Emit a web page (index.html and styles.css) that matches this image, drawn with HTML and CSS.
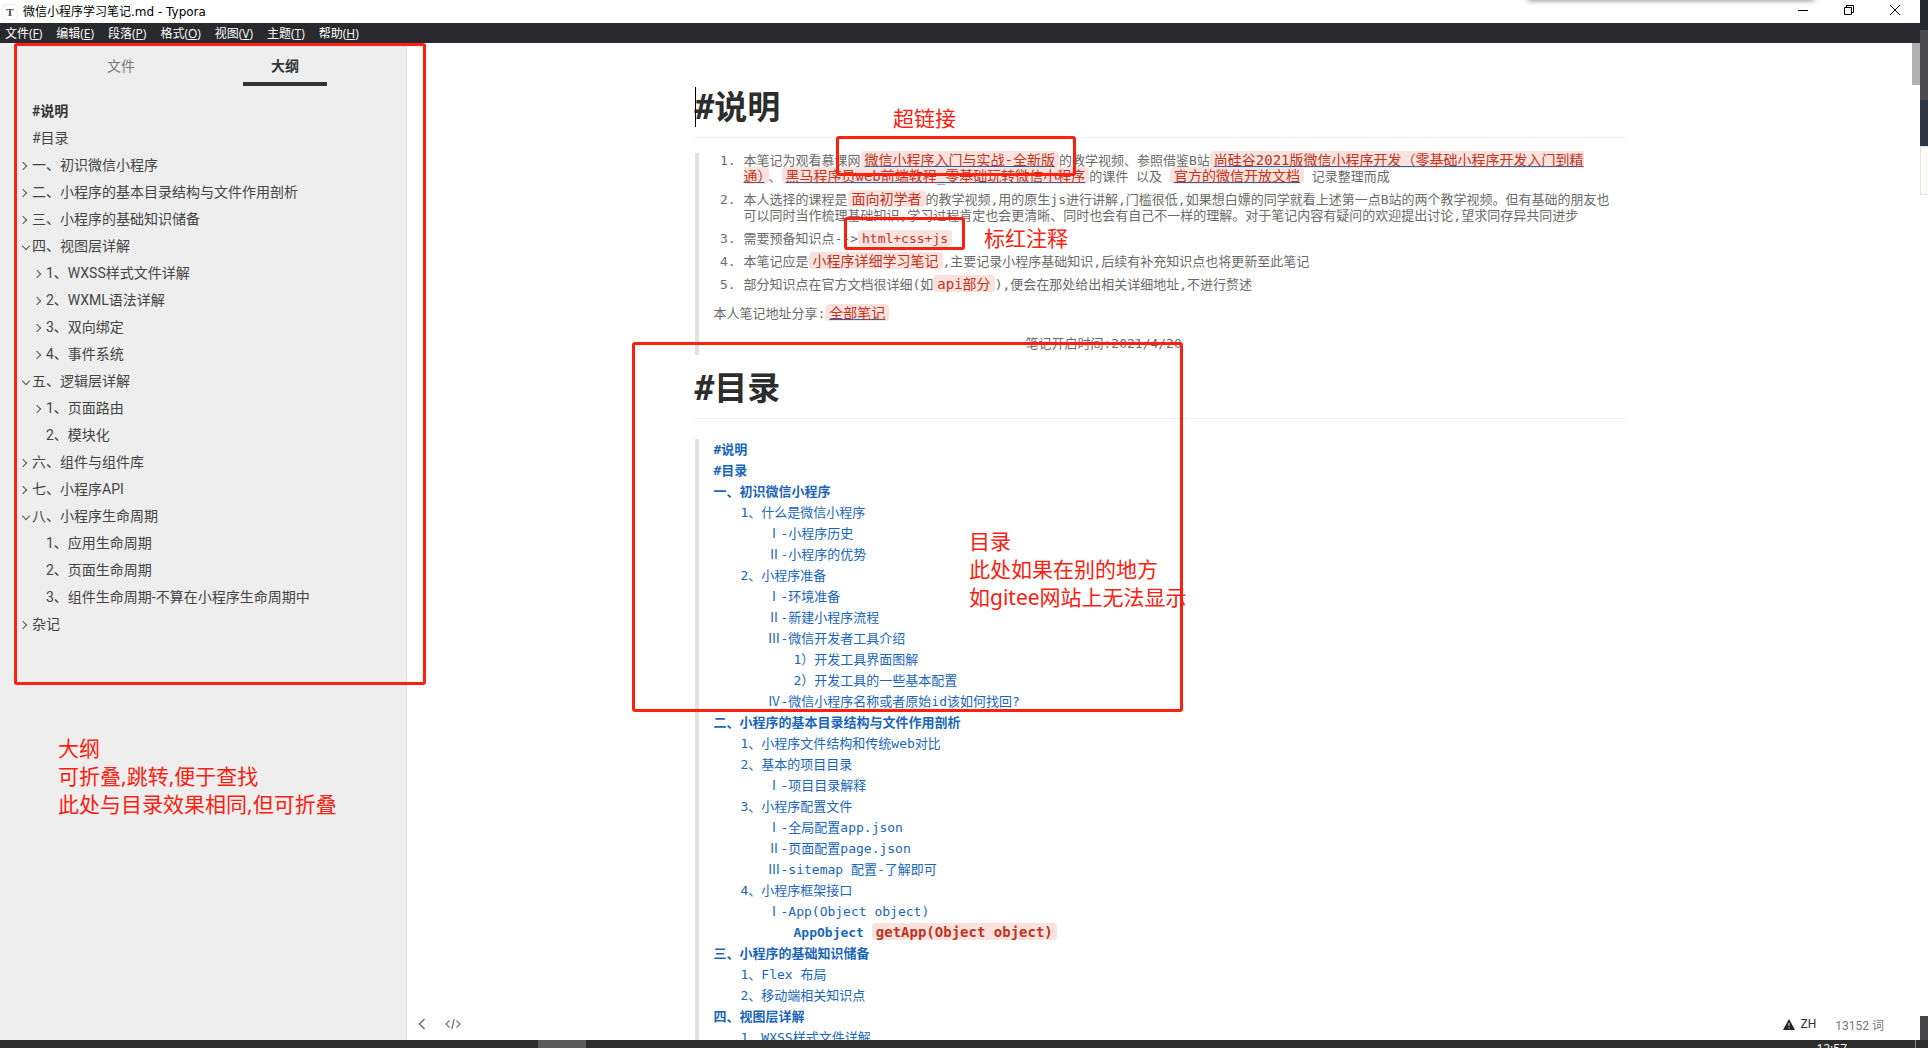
FILE: index.html
```html
<!DOCTYPE html>
<html lang="zh-CN">
<head>
<meta charset="utf-8">
<title>微信小程序学习笔记.md - Typora</title>
<link rel="stylesheet" href="styles.css">
</head>
<body>
<div class="screen">
  <div class="desktop">
    <div class="window">
      <header class="titlebar">
        <span class="app-icon">T</span>
        <span class="title">微信小程序学习笔记.md - Typora</span>
        <div class="window-buttons">
          <button type="button" aria-label="最小化"><svg width="12" height="12" viewBox="0 0 12 12"><path d="M1 6.500h10"/></svg></button>
          <button type="button" aria-label="还原"><svg width="12" height="12" viewBox="0 0 12 12"><path d="M1.500 3.500h7v7h-7zM3.500 3.500v-2h7v7h-2"/></svg></button>
          <button type="button" aria-label="关闭"><svg width="12" height="12" viewBox="0 0 12 12"><path d="M1 1l10 10M11 1L1 11"/></svg></button>
        </div>
      </header>
      <nav class="menubar">
        <button type="button">文件(<u>F</u>)</button>
        <button type="button">编辑(<u>E</u>)</button>
        <button type="button">段落(<u>P</u>)</button>
        <button type="button">格式(<u>O</u>)</button>
        <button type="button">视图(<u>V</u>)</button>
        <button type="button">主题(<u>T</u>)</button>
        <button type="button">帮助(<u>H</u>)</button>
      </nav>
      <div class="workspace">
        <aside class="sidebar">
          <div class="tabs">
            <button type="button" class="tab">文件</button>
            <button type="button" class="tab active">大纲</button>
          </div>
          <ul class="outline">
            <li class="current"><a href="#intro">#说明</a></li>
            <li><a href="#toc">#目录</a></li>
            <li class="closed"><a href="#s1">一、初识微信小程序</a></li>
            <li class="closed"><a href="#s2">二、小程序的基本目录结构与文件作用剖析</a></li>
            <li class="closed"><a href="#s3">三、小程序的基础知识储备</a></li>
            <li class="open"><a href="#s4">四、视图层详解</a></li>
            <li class="sub closed"><a href="#s41">1、WXSS样式文件详解</a></li>
            <li class="sub closed"><a href="#s42">2、WXML语法详解</a></li>
            <li class="sub closed"><a href="#s43">3、双向绑定</a></li>
            <li class="sub closed"><a href="#s44">4、事件系统</a></li>
            <li class="open"><a href="#s5">五、逻辑层详解</a></li>
            <li class="sub closed"><a href="#s51">1、页面路由</a></li>
            <li class="sub"><a href="#s52">2、模块化</a></li>
            <li class="closed"><a href="#s6">六、组件与组件库</a></li>
            <li class="closed"><a href="#s7">七、小程序API</a></li>
            <li class="open"><a href="#s8">八、小程序生命周期</a></li>
            <li class="sub"><a href="#s81">1、应用生命周期</a></li>
            <li class="sub"><a href="#s82">2、页面生命周期</a></li>
            <li class="sub"><a href="#s83">3、组件生命周期-不算在小程序生命周期中</a></li>
            <li class="closed"><a href="#s9">杂记</a></li>
          </ul>
        </aside>
        <main class="editor">
          <article class="document">
            <h1 id="intro" class="editing">#说明</h1>
            <blockquote>
              <ol>
                <li>本笔记为观看慕课网<a href="#v1"><code>微信小程序入门与实战-全新版</code></a>的教学视频、参照借鉴B站<a href="#v2"><code>尚硅谷2021版微信小程序开发（零基础小程序开发入门到精通）</code></a>、<a href="#v3"><code>黑马程序员web前端教程_零基础玩转微信小程序</code></a>的课件 以及 <a href="#v4"><code>官方的微信开放文档</code></a> 记录整理而成</li>
                <li>本人选择的课程是<code>面向初学者</code>的教学视频,用的原生js进行讲解,门槛很低,如果想白嫖的同学就看上述第一点B站的两个教学视频。但有基础的朋友也可以同时当作梳理基础知识,学习过程肯定也会更清晰、同时也会有自己不一样的理解。对于笔记内容有疑问的欢迎提出讨论,望求同存异共同进步</li>
                <li>需要预备知识点--&gt;<code class="latin">html+css+js</code></li>
                <li>本笔记应是<code>小程序详细学习笔记</code>,主要记录小程序基础知识,后续有补充知识点也将更新至此笔记</li>
                <li>部分知识点在官方文档很详细(如<code>api部分</code>),便会在那处给出相关详细地址,不进行赘述</li>
              </ol>
              <p>本人笔记地址分享:<a href="#all"><code>全部笔记</code></a></p>
              <p class="date">笔记开启时间:2021/4/20</p>
            </blockquote>
            <h1 id="toc">#目录</h1>
            <blockquote class="toc">
              <a class="l1" href="#intro">#说明</a>
              <a class="l1" href="#toc">#目录</a>
              <a class="l1" href="#s1">一、初识微信小程序</a>
              <a class="l2" href="#s11">1、什么是微信小程序</a>
              <a class="l3" href="#s111">Ⅰ-小程序历史</a>
              <a class="l3" href="#s112">Ⅱ-小程序的优势</a>
              <a class="l2" href="#s12">2、小程序准备</a>
              <a class="l3" href="#s121">Ⅰ-环境准备</a>
              <a class="l3" href="#s122">Ⅱ-新建小程序流程</a>
              <a class="l3" href="#s123">Ⅲ-微信开发者工具介绍</a>
              <a class="l4" href="#s1231">1）开发工具界面图解</a>
              <a class="l4" href="#s1232">2）开发工具的一些基本配置</a>
              <a class="l3" href="#s124">Ⅳ-微信小程序名称或者原始id该如何找回?</a>
              <a class="l1" href="#s2">二、小程序的基本目录结构与文件作用剖析</a>
              <a class="l2" href="#s21">1、小程序文件结构和传统web对比</a>
              <a class="l2" href="#s22">2、基本的项目目录</a>
              <a class="l3" href="#s221">Ⅰ-项目目录解释</a>
              <a class="l2" href="#s23">3、小程序配置文件</a>
              <a class="l3" href="#s231">Ⅰ-全局配置app.json</a>
              <a class="l3" href="#s232">Ⅱ-页面配置page.json</a>
              <a class="l3" href="#s233">Ⅲ-sitemap 配置-了解即可</a>
              <a class="l2" href="#s24">4、小程序框架接口</a>
              <a class="l3" href="#s241">Ⅰ-App(Object object)</a>
              <a class="l4 strong" href="#s2411">AppObject <code>getApp(Object object)</code></a>
              <a class="l1" href="#s3">三、小程序的基础知识储备</a>
              <a class="l2" href="#s31">1、Flex 布局</a>
              <a class="l2" href="#s32">2、移动端相关知识点</a>
              <a class="l1" href="#s4">四、视图层详解</a>
              <a class="l2" href="#s41">1、WXSS样式文件详解</a>
            </blockquote>
          </article>
          <div class="scrollbar"></div>
          <footer class="status">
            <button type="button" aria-label="隐藏侧边栏"><svg width="8" height="12" viewBox="0 0 8 12"><path d="M6.500 1L1.500 6l5 5" stroke-width="1.700"/></svg></button>
            <button type="button" aria-label="源代码模式"><svg width="16" height="12" viewBox="0 0 16 12"><path d="M4.500 2.500L1 6l3.500 3.500M11.500 2.500L15 6l-3.500 3.500M9.200 1L6.800 11" stroke-width="1.300"/></svg></button>
            <button type="button" class="spell"><svg width="12" height="11" viewBox="0 0 12 11"><path class="tri" d="M6 0l6 11H0z"/><path class="bang" d="M6 4v3M6 8.200v1.300"/></svg>ZH</button>
            <button type="button" class="words">13152 词</button>
          </footer>
        </main>
      </div>
    </div>
    <div class="behind"><i class="b1"></i><i class="b2"></i><i class="b3"></i><i class="b4"></i><i class="b5"></i><i class="b6"></i></div>
  </div>
  <div class="taskbar"><i class="task"></i><span class="clock">12:57</span><i class="peek"></i></div>
  <div class="hanging-shadow"></div>
  <div class="mark mark-outline"></div>
  <div class="mark mark-link"></div>
  <div class="mark mark-code"></div>
  <div class="mark mark-toc"></div>
  <div class="note note-link">超链接</div>
  <div class="note note-code">标红注释</div>
  <div class="note note-toc">目录<br>此处如果在别的地方<br>如gitee网站上无法显示</div>
  <div class="note note-outline">大纲<br>可折叠,跳转,便于查找<br>此处与目录效果相同,但可折叠</div>
</div>
</body>
</html>
```
FILE: styles.css
```css
* { box-sizing: border-box; }
body { margin: 0; background: #fff; font-family: Roboto, "Noto Sans CJK SC", sans-serif; }
button { border: 0; padding: 0; background: none; font: inherit; color: inherit; }
a { color: inherit; text-decoration: none; }
ul, ol, p, h1, blockquote { margin: 0; padding: 0; }
svg { display: block; fill: none; stroke: currentColor; }

.screen { position: relative; display: flex; flex-direction: column; height: 100vh; overflow: hidden; }
.desktop { display: flex; flex: 1; min-height: 0; }
.window { display: flex; flex-direction: column; flex: 1; min-width: 0; }

.titlebar { display: flex; align-items: center; height: 23px; padding-left: 3px; font: 12px/22px "DejaVu Sans", "Noto Sans CJK SC", sans-serif; color: #000; }
.app-icon { width: 14px; height: 14px; margin-right: 6px; border-radius: 3px; box-shadow: 0 0 2px #bbb; font: bold 11px/14px "Liberation Serif", serif; text-align: center; color: #444; }
.window-buttons { display: flex; gap: 34px; margin-left: auto; padding: 0 19px 3px 0; }
.menubar { display: flex; gap: 14px; height: 20px; padding-left: 5px; background: #292a2e; color: #fff; font: 12px/22px "Open Sans", "Noto Sans CJK SC", sans-serif; }
.workspace { display: flex; flex: 1; min-height: 0; }

.sidebar { flex: none; width: 407px; background: #eee; border-right: 1px solid #ddd; color: #444; font-size: 14px; }
.tabs { display: flex; height: 43px; margin: 0 39px; }
.tab { position: relative; flex: 1; padding: 6px 0 2px; line-height: 35px; color: #777; }
.tab.active { font-weight: bold; color: #333; }
.tab.active::after { content: ""; position: absolute; left: 50%; bottom: 0; width: 84px; margin-left: -42px; border-bottom: 4px solid #333; }
.outline { list-style: none; padding: 12px 0 0 32px; }
.outline li { position: relative; line-height: 27px; }
.outline .sub { padding-left: 14px; }
.outline .current { font-weight: bold; color: #333; }
.outline .closed::before, .outline .open::before { content: ""; position: absolute; top: 11px; width: 5px; height: 5px; margin-left: -12px; border: solid #555; border-width: 1px 1px 0 0; transform: rotate(45deg); }
.outline .open::before { top: 10px; margin-left: -9px; transform: rotate(135deg); }

.editor { position: relative; flex: 1; min-width: 0; padding: 44px 8px 0 0; overflow: hidden; color: #6b6b6b; }
.document { max-width: 930px; margin: 0 auto; font: 13px/16px "DejaVu Sans Mono", "Noto Sans CJK SC", monospace; }
h1 { height: 51px; border-bottom: 1px solid #eee; font-size: 33px; line-height: 42px; color: #2d2d2d; }
.editing { position: relative; }
.editing::before { content: ""; position: absolute; left: 0; top: 0; height: 40px; border-left: 1px solid #000; }
blockquote { margin: 15px 0 13px; padding: 0 15px; border-left: 4px solid #dfe2e5; }
ol { padding-left: 30px; }
li + li { margin-top: 7px; }
.outline li + li { margin-top: 0; }
p { padding-top: 13px; }
.date { padding: 14px 0 3px 312px; }
code { padding: 1px 4px 0; border-radius: 4px; background: #fae3df; color: #c0341d; font-family: inherit; font-size: 14px; line-height: 0; }
.latin { font-size: 13px; }
blockquote a { text-decoration: underline; text-decoration-color: #1a66b8; color: #1a66b8; }
.toc { display: flex; flex-direction: column; margin: 20px 0; color: #1a66b8; line-height: 21px; }
.toc a { text-decoration: none; }
.l1, .strong { font-weight: bold; }
.l2 { padding-left: 27px; }
.l3 { padding-left: 54px; }
.l4 { padding-left: 80px; }

.scrollbar { position: absolute; top: 0; right: 0; width: 8px; height: 42px; background: #b0b0b0; }
.status { position: absolute; left: 0; right: 0; bottom: 0; display: flex; align-items: center; height: 32px; padding: 0 36px 0 11px; gap: 19px; font-size: 12px; color: #777; }
.spell { display: flex; align-items: center; gap: 6px; margin-left: auto; color: #333; }
.tri { fill: #222; stroke: none; }
.bang { stroke: #fff; }

.behind { display: flex; flex-direction: column; width: 8px; }
.b1 { height: 30px; background: #25262e; }
.b2 { height: 70px; background: #4a494b; }
.b3 { height: 46px; background: #2e3743; }
.b4 { height: 49px; border: 1px solid #dde5f0; border-right: 0; background: #fffaf4; }
.b5 { flex: 1; }
.b6 { height: 24px; background: #454548; }

.taskbar { display: flex; height: 8px; padding-left: 538px; background: #2d2d2d; overflow: hidden; }
.task { width: 48px; background: #5a5a5a; }
.clock { margin-left: auto; padding-top: 2px; font: 12px/14px "Open Sans", sans-serif; color: #fff; }
.peek { width: 13px; margin-left: 68px; border-left: 1px solid #888; }

.hanging-shadow { position: absolute; top: -10px; right: 115px; width: 284px; height: 10px; box-shadow: 0 0 5px 1px #999; }
.mark { position: absolute; border: 3px solid #ff2010; border-radius: 3px; }
.mark-outline { left: 14px; top: 43px; width: 412px; height: 642px; }
.mark-link { left: 836px; top: 136px; width: 240px; height: 40px; }
.mark-code { left: 844px; top: 217px; width: 121px; height: 33px; }
.mark-toc { left: 632px; top: 342px; width: 551px; height: 370px; }
.note { position: absolute; font: 21px/28px "Noto Sans", "Noto Sans CJK SC", sans-serif; color: #ff2010; white-space: nowrap; }
.note-link { left: 893px; top: 104px; }
.note-code { left: 984px; top: 224px; }
.note-toc { left: 969px; top: 527px; }
.note-outline { left: 58px; top: 734px; }
```
